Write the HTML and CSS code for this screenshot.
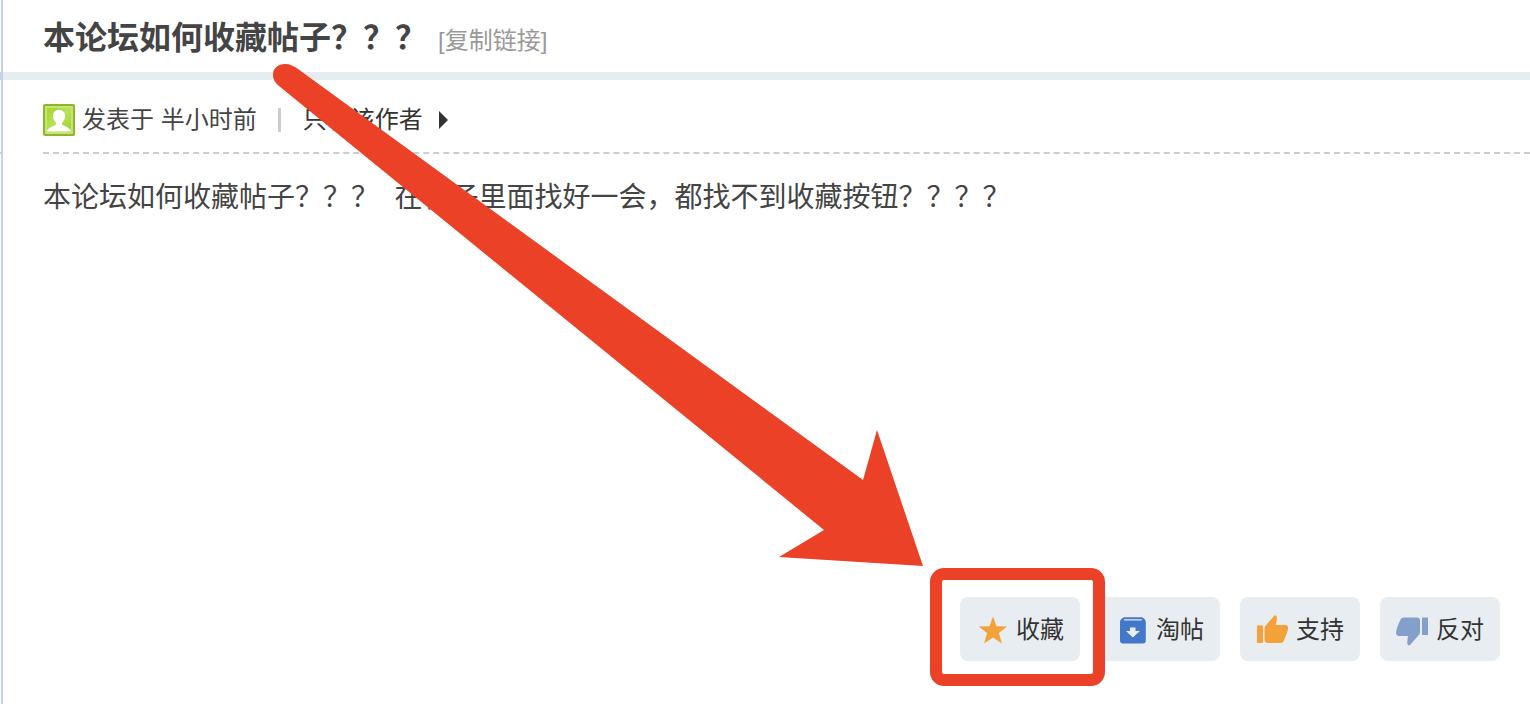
FILE: index.html
```html
<!DOCTYPE html>
<html lang="zh-CN">
<head>
  <meta charset="UTF-8" />
  <meta name="viewport" content="width=device-width, initial-scale=1.0"/>
  <title>本论坛如何收藏帖子？？？</title>
  <link rel="stylesheet" href="styles.css">
</head>
<body>

  <!-- Edge of the author column -->
  <div class="side">
    <div class="side-bar"></div>
    <div class="side-line"></div>
  </div>

  <main class="post">

    <!-- Thread title -->
    <header class="post-header">
      <h1>本论坛如何收藏帖子？？？</h1>
      <a class="copy-link" href="#">[复制链接]</a>
    </header>

    <div class="post-body">
      <!-- Author info -->
      <div class="post-info">
        <svg class="avatar" viewBox="0 0 32 32" aria-hidden="true">
          <defs>
            <linearGradient id="green" x1="0" y1="0" x2="1" y2="1">
              <stop offset="0" stop-color="#a5d62c"/>
              <stop offset="0.5" stop-color="#b9e25a"/>
              <stop offset="1" stop-color="#a0d02c"/>
            </linearGradient>
          </defs>
          <rect width="32" height="32" rx="2" fill="#8fb52c"/>
          <rect x="2" y="2" width="28" height="28" fill="#c5e672"/>
          <rect x="4" y="4" width="24" height="24" fill="url(#green)"/>
          <path d="M16 6c4 0 6 2.400 6 6 0 3-1 5-3 6.500v2c1.500 1.500 4.500 2 6.500 3.500 1.500 1 2.500 2 2.500 3.500H4c0-1.500 1-2.500 2.500-3.500 2-1.500 5-2 6.500-3.500v-2c-2-1.500-3-3.500-3-6.500 0-3.600 2-6 6-6z" fill="#fff"/>
        </svg>
        <span class="date">发表于 半小时前</span>
        <span class="pipe"></span>
        <a class="only-author" href="#">只看该作者</a>
        <span class="caret"></span>
      </div>

      <!-- Message -->
      <p class="message">本论坛如何收藏帖子？？？&nbsp; 在帖子里面找好一会，都找不到收藏按钮？？？？</p>

      <!-- Action buttons -->
      <div class="actions">
        <button class="highlighted" type="button">
          <svg viewBox="0 0 32 32" aria-hidden="true">
            <path d="M17 2.500l3.500 9.700 10.700.3-8.300 6.500 3 10.500L17 23.500 8.100 29.500l3-10.500-8.300-6.500 10.700-.3z" fill="#f2a238"/>
          </svg>
          <span>收藏</span>
        </button>
        <button type="button">
          <svg viewBox="0 0 32 32" aria-hidden="true">
            <path d="M8.500 3.300h17c1.600 0 4.300 2.400 4.300 4.700v18.500a3 3 0 0 1-3 3H7a3 3 0 0 1-3-3V8c0-2.300 2.900-4.700 4.500-4.700z" fill="#4377ca"/>
            <path d="M8.500 5.800h16.800" stroke="#e8edf1" stroke-width="1.300" stroke-linecap="round"/>
            <path d="M14 13.500h5.500v3.500H24l-7.200 6.500L10 17h4z" fill="#e8edf1"/>
          </svg>
          <span>淘帖</span>
        </button>
        <button type="button">
          <svg viewBox="0 0 32 32" aria-hidden="true">
            <path d="M1 11.500h6V29H1zM9.300 12L18.500 1.500c.8-.8 2.500.5 2.500 2.500l-1 7h9.500c2 0 2.800 1.500 2.500 3.500-.3 3-2.500 8.500-4 12-.7 1.700-1.700 2.500-3.500 2.500H12c-2 0-3.500-1-3.500-3V14c0-.8.200-1.400.8-2z" fill="#f2a238"/>
          </svg>
          <span>支持</span>
        </button>
        <button type="button">
          <svg viewBox="0 0 32 32" aria-hidden="true">
            <path d="M26 3.500h6V21h-6zM22.800 21L14 31c-.8 1-2.900-.5-2.800-2.500l.8-6.500H3c-2.500 0-3.200-2-2.800-4.500C.8 13.500 3 9 4.500 5.800 5.200 4.200 6 3.500 8 3.500h12.500C22.500 3.500 24 4.500 24 6.500v12c0 1-.4 1.800-1.200 2.500z" fill="#849fcb"/>
          </svg>
          <span>反对</span>
        </button>
      </div>
    </div>
  </main>

  <!-- Arrow pointing at the favourite button -->
  <svg class="arrow" viewBox="0 0 930 570" aria-hidden="true">
    <path d="M285 64C290 64 294 66 298 69L863 480 877 430 923 566 779 557 824 530 279 86C275 83 273 79 273 75 273 68 278 64 285 64z" fill="#ea4127"/>
  </svg>

</body>
</html>
```

FILE: styles.css
```css
* {
  box-sizing: border-box;
}

body {
  font-family: "Liberation Sans", "Noto Sans CJK SC", sans-serif;
  margin: 0;
  background: #fff;
  color: #444;
  display: flex;
  min-height: 100vh;
}

a {
  color: inherit;
  text-decoration: none;
}

/* Thin slice of the author column, with its border */
.side {
  width: 3px;
  border-right: 2px solid #c2d3e3;
  padding-top: 72px;
}

.side-bar {
  height: 8px;
  background: #c2d3e3;
}

.side-line {
  margin-top: 72px;
  height: 2px;
  background: #cdcdcd;
}

.post {
  flex: 1;
  display: flex;
  flex-direction: column;
}

/* Title row */
.post-header {
  display: flex;
  align-items: baseline;
  gap: 11px;
  height: 80px;
  padding: 14px 40px 0;
  border-bottom: 8px solid #e5edf1;
}

h1 {
  margin: 0;
  font-size: 32px;
  line-height: 48px;
}

.copy-link {
  color: #999;
  font-size: 24px;
  line-height: 36px;
}

.post-body {
  flex: 1;
  display: flex;
  flex-direction: column;
  padding-left: 40px;
}

/* Author info row */
.post-info {
  display: flex;
  align-items: center;
  height: 74px;
  padding-top: 8px;
  border-bottom: 2px dashed #cdcdcd;
  font-size: 24px;
  line-height: 36px;
}

.avatar {
  width: 32px;
  height: 32px;
  margin-right: 7px;
}

.pipe {
  width: 3px;
  height: 24px;
  margin: 0 22px 0 21px;
  background: #ccc;
}

.only-author {
  color: #333;
}

.caret {
  margin-left: 16px;
  border: 9px solid transparent;
  border-left-color: #333;
  border-right: 0;
}

.message {
  flex: 1;
  margin: 0;
  padding: 22px 30px 20px 0;
  font-size: 28px;
  line-height: 44px;
}

/* Action buttons */
.actions {
  display: flex;
  justify-content: flex-end;
  gap: 20px;
  padding: 0 30px 43px 0;
}

button {
  position: relative;
  display: flex;
  align-items: center;
  justify-content: center;
  gap: 8px;
  height: 64px;
  padding: 2px 16px 0;
  border: none;
  border-radius: 8px;
  background: #e8edf1;
  color: #333;
  font-family: inherit;
  font-size: 24px;
  line-height: 36px;
  cursor: pointer;
}

button svg {
  width: 32px;
  height: 32px;
}

/* Red frame around the favourite button */
.highlighted {
  z-index: 1;
}

.highlighted::after {
  content: "";
  position: absolute;
  inset: -29px -25px -25px -30px;
  border: 12px solid #ea4127;
  border-radius: 14px;
}

.arrow {
  position: absolute;
  top: 0;
  left: 0;
  width: 930px;
  height: 570px;
  pointer-events: none;
}
```
